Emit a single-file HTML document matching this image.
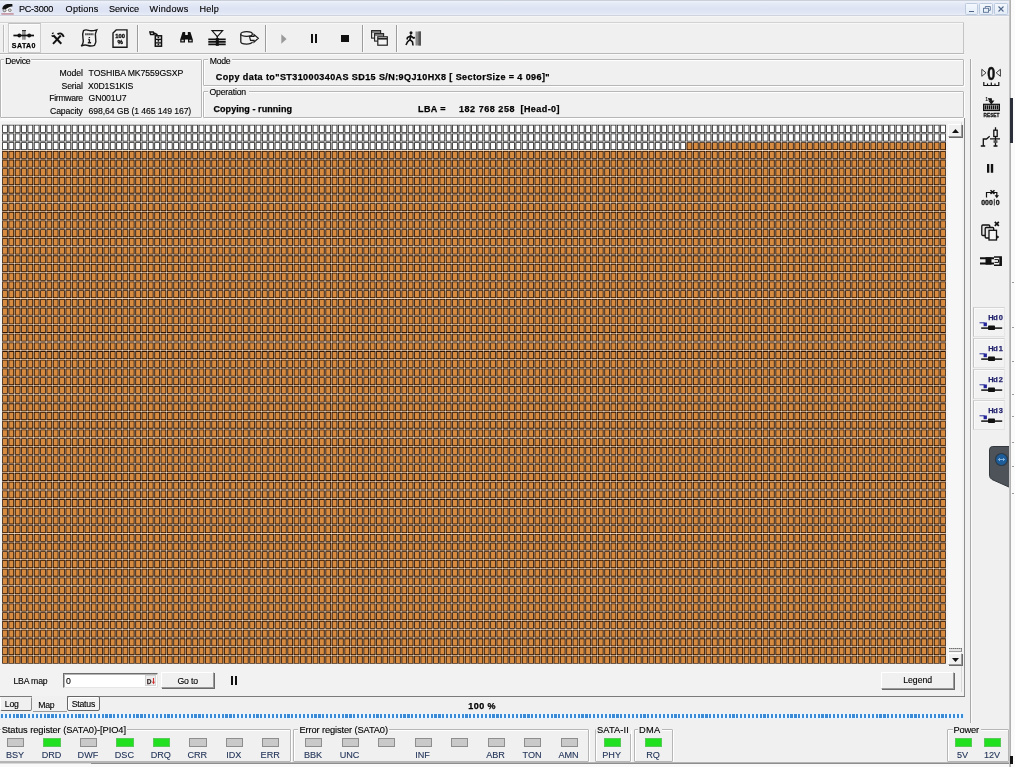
<!DOCTYPE html>
<html><head><meta charset="utf-8"><title>PC-3000</title>
<style>
html,body{margin:0;padding:0;}
body{width:1015px;height:767px;overflow:hidden;background:#f0f0f0;position:relative;font-family:"Liberation Sans",sans-serif;font-size:8.7px;color:#000;}
.a{position:absolute;box-sizing:border-box;}
.t{position:absolute;white-space:nowrap;-webkit-text-stroke:0.12px;}
.grp{border:1px solid #b6b6b6;box-shadow:inset 1px 1px 0 #fff,1px 1px 0 #fff;border-radius:1px;}
.lbl{background:#f0f0f0;}
.ind{border:1px solid #8e8e8e;background:#c9c9c9;}
.ind.on{background:#20e020;border-color:#5ac85a;}
.btn{background:#f0f0f0;border:1px solid;border-color:#fff #9a9a9a #9a9a9a #fff;box-shadow:1px 1px 0 #6a6a6a;}
.sep{width:1px;background:#9c9c9c;box-shadow:1px 0 0 #fbfbfb;}
svg{position:absolute;overflow:visible;}
#root{position:absolute;left:0;top:0;width:1015px;height:767px;overflow:hidden;will-change:transform;}
</style></head><body><div id="root">
<div class="a " style="left:0.00px;top:0.00px;width:1010.00px;height:1.00px;background:#c9d0da;"></div>
<div class="a " style="left:0.00px;top:1.00px;width:1010.00px;height:14.00px;background:linear-gradient(180deg,#eef2fa 0,#e4e9f6 20%,#dde3f3 55%,#dfe5f4 80%,#e9edf7 100%);"></div>
<div class="a " style="left:0.00px;top:15.00px;width:1010.00px;height:1.00px;background:#cdd3df;"></div>
<div class="a " style="left:0.00px;top:16.00px;width:1010.00px;height:1.00px;background:#f5f5f6;"></div>
<div class="t " style="left:18.90px;top:4px;font-size:9.1px;line-height:10px;letter-spacing:-0.231px;">PC-3000</div>
<div class="t " style="left:65.60px;top:4px;font-size:9.1px;line-height:10px;letter-spacing:0.220px;">Options</div>
<div class="t " style="left:109.00px;top:4px;font-size:9.1px;line-height:10px;letter-spacing:-0.049px;">Service</div>
<div class="t " style="left:149.50px;top:4px;font-size:9.1px;line-height:10px;letter-spacing:0.298px;">Windows</div>
<div class="t " style="left:199.50px;top:4px;font-size:9.1px;line-height:10px;letter-spacing:0.196px;">Help</div>
<svg style="left:1px;top:3px" width="13" height="12" viewBox="0 0 13 12"><ellipse cx="6.500" cy="6.800" rx="5" ry="3" fill="#fafafa"/><path d="M1.300 5.600Q2 1.500 6.500 1L11.300 .9 11.500 3.500Q9.500 3.300 8 4.300L4.500 6.300 1.500 6.500z" fill="#111"/><ellipse cx="3.600" cy="7.400" rx="1.500" ry="1.300" fill="#ddd" stroke="#444" stroke-width=".7"/><ellipse cx="8.800" cy="7.200" rx="1.500" ry="1.300" fill="#ddd" stroke="#555" stroke-width=".7"/><rect x=".3" y="10.400" width="12.400" height="1.100" fill="#b86a78"/></svg>
<div class="a " style="left:965.00px;top:2.50px;width:12.70px;height:12.70px;background:linear-gradient(180deg,#f4f8fd,#e3ecf7);border:1px solid #bccbde;border-radius:1.5px;"></div>
<div class="a " style="left:979.40px;top:2.50px;width:13.60px;height:12.70px;background:linear-gradient(180deg,#f4f8fd,#e3ecf7);border:1px solid #bccbde;border-radius:1.5px;"></div>
<div class="a " style="left:994.30px;top:2.50px;width:13.70px;height:12.70px;background:linear-gradient(180deg,#f4f8fd,#e3ecf7);border:1px solid #bccbde;border-radius:1.5px;"></div>
<div class="a " style="left:969.40px;top:10.80px;width:4.20px;height:1.20px;background:#50678a;"></div>
<svg style="left:982.500px;top:5.500px" width="8" height="7" viewBox="0 0 8 7"><path d="M2.300 .5h5v3.800h-1.300 M2.300 .5v1.500" fill="none" stroke="#5a7194" stroke-width=".9"/><rect x=".5" y="2.300" width="5" height="4" fill="none" stroke="#5a7194" stroke-width=".9"/></svg>
<svg style="left:998.300px;top:6px" width="6" height="6" viewBox="0 0 6 6"><path d="M.5 .5L5.500 5.500M5.500 .5L.5 5.500" stroke="#50678a" stroke-width="1.100"/></svg>
<div class="a " style="left:0.00px;top:22.00px;width:964.00px;height:1.00px;background:#d2d2d2;"></div>
<div class="a " style="left:0.00px;top:23.00px;width:964.00px;height:1.00px;background:#f8f8f8;"></div>
<div class="a " style="left:0.00px;top:53.00px;width:964.00px;height:1.00px;background:#b9b9b9;"></div>
<div class="a " style="left:0.00px;top:54.00px;width:964.00px;height:1.00px;background:#fafafa;"></div>
<div class="a " style="left:963.00px;top:23.00px;width:1.00px;height:30.00px;background:#c4c4c4;"></div>
<div class="a " style="left:2.50px;top:25.00px;width:1.00px;height:27.00px;background:#bcbcbc;box-shadow:1px 0 0 #fafafa;"></div>
<div class="a " style="left:8.00px;top:23.00px;width:33.00px;height:30.00px;border:1px solid #cdcdcd;border-top-color:#c0c0c0;background:#f5f5f5;box-shadow:inset 1px 1px 0 #fcfcfc;"></div>
<div class="t " style="left:11.80px;top:42px;font-size:7px;line-height:7px;letter-spacing:0.438px;font-weight:bold;-webkit-text-stroke:0.25px;">SATA0</div>
<svg style="left:13px;top:30px" width="22" height="10" viewBox="0 0 22 10"><path d="M.4 5.500h20.600" stroke="#111" stroke-width="1.700"/><path d="M10 .3v9.400M11.900 .3v9.400" stroke="#111" stroke-width=".8"/><path d="M9 .6h4" stroke="#111" stroke-width=".9"/><circle cx="6.300" cy="5.500" r="1.900" fill="#111"/><circle cx="16.200" cy="5.500" r="1.900" fill="#111"/></svg>
<svg style="left:51px;top:31.500px" width="14" height="13" viewBox="0 0 14 13"><path d="M2.300 3.300L10.300 11.800" stroke="#111" stroke-width="2"/><path d="M9.800 3.500L2 11.800" stroke="#111" stroke-width="1.900"/><path d="M6.500 2.300Q10.500 -.5 12.800 4.800" stroke="#111" stroke-width="1.900" fill="none"/><path d="M.8 3.200Q1.500 5 3.300 4.200M1 1.800L2.600 .8" stroke="#111" stroke-width="1.300" fill="none"/></svg>
<svg style="left:80px;top:29px" width="18" height="18" viewBox="0 0 18 18"><path d="M3.500 1.600Q5.500 .3 8.500 1.300T16.800 .8Q14.600 5 15.600 9T14.500 16.300Q11 17.600 8 16.500T1.200 17Q4 14 3 9.500T3.500 1.600z" fill="#f2f2f2" stroke="#1a1a1a" stroke-width="1.400"/><path d="M5.300 5.200h8.400" stroke="#1a1a1a" stroke-width="2" stroke-dasharray="1.300 .7"/><path d="M9.400 8v1.100M9.400 10.200v3.400M7.800 13.800h3.300M8.300 10.400h1.200" stroke="#1a1a1a" stroke-width="1.400"/></svg>
<svg style="left:112px;top:29px" width="16" height="19" viewBox="0 0 16 19"><path d="M4.200 .9H15v17.300H1V4z" fill="#f4f4f4" stroke="#1a1a1a" stroke-width="1.400"/><text x="8.200" y="9.300" font-family="Liberation Sans,sans-serif" font-size="5.800" font-weight="bold" text-anchor="middle" fill="#111" stroke="#111" stroke-width=".35">100</text><text x="8.200" y="15" font-family="Liberation Sans,sans-serif" font-size="6" font-weight="bold" text-anchor="middle" fill="#111" stroke="#111" stroke-width=".35">%</text></svg>
<div class="a sep" style="left:137.00px;top:25.00px;width:1.00px;height:27.00px;"></div>
<svg style="left:148.500px;top:30.500px" width="14" height="16" viewBox="0 0 14 16"><path d="M.8 1h3.500l.8 2.500H1.500z" fill="#f4f4f4" stroke="#111" stroke-width="1.300"/><path d="M5 2l3 1.500v2" stroke="#111" stroke-width="1.400" fill="none"/><rect x="6.300" y="4.800" width="6.200" height="10.400" fill="#eee" stroke="#111" stroke-width="1.500"/><path d="M6.300 8.300h6.200M6.300 11.800h6.200" stroke="#111" stroke-width="1.300"/><path d="M9.400 5.500v9.500" stroke="#111" stroke-width="1.600" stroke-dasharray="1.800 1.700"/></svg>
<svg style="left:179.500px;top:31.500px" width="13" height="11" viewBox="0 0 13 11"><path d="M2.600 0h2.600v3h2.600V0h2.600l2.400 7.500V10.500H8V7.500H5v3H.2V7.500z" fill="#111"/><rect x="1.500" y="7.800" width="2.200" height="1.500" fill="#ccc"/><rect x="9.300" y="7.800" width="2.200" height="1.500" fill="#ccc"/></svg>
<svg style="left:208px;top:30.300px" width="18" height="16" viewBox="0 0 18 16"><path d="M4 .6h10.700L9.300 6.600z" fill="#f4f4f4" stroke="#111" stroke-width="1.100"/><path d="M9.300 6v3" stroke="#111" stroke-width="1.300"/><path d="M.3 9.300h17.400M.3 11.800h17.400M.3 14.300h17.400" stroke="#111" stroke-width="1.700"/><rect x="7.800" y="8" width="3" height="7.800" fill="#111"/></svg>
<svg style="left:239.500px;top:31px" width="19" height="14" viewBox="0 0 19 14"><path d="M.8 3v7.800c0 1.300 2.600 2.300 5.800 2.300s5.800-1 5.800-2.300" fill="none" stroke="#1c1c1c" stroke-width="1.300"/><ellipse cx="6.600" cy="3" rx="5.800" ry="2.300" fill="#f6f6f6" stroke="#1c1c1c" stroke-width="1.300"/><path d="M9.500 5.300h4.500v-1.800l4.300 3.800-4.300 3.800V9.300h-3.500z" fill="#f6f6f6" stroke="#1c1c1c" stroke-width="1.200"/></svg>
<div class="a sep" style="left:265.00px;top:25.00px;width:1.00px;height:27.00px;"></div>
<svg style="left:281px;top:34px" width="6" height="10" viewBox="0 0 6 10"><path d="M.3 .3L5.600 5 .3 9.700z" fill="#9a9a9a"/></svg>
<div class="a " style="left:310.70px;top:34.00px;width:2.30px;height:9.20px;background:#111;"></div>
<div class="a " style="left:315.20px;top:34.00px;width:2.30px;height:9.20px;background:#111;"></div>
<div class="a " style="left:341.30px;top:34.60px;width:7.60px;height:7.60px;background:#111;"></div>
<div class="a sep" style="left:362.00px;top:25.00px;width:1.00px;height:27.00px;"></div>
<svg style="left:371px;top:30px" width="17" height="16" viewBox="0 0 17 16"><rect x=".6" y=".6" width="9" height="7.500" fill="#e8e8e8" stroke="#222" stroke-width="1.1"/><rect x="3.6" y="3.6" width="9" height="7.500" fill="#e8e8e8" stroke="#222" stroke-width="1.1"/><rect x="6.800" y="6.800" width="9.500" height="8.400" fill="#f4f4f4" stroke="#222" stroke-width="1.2"/><path d="M6.800 8.800h9.500" stroke="#222" stroke-width="1.600"/><path d="M.6 2h9M3.600 5h9" stroke="#222" stroke-width="1.2"/></svg>
<div class="a sep" style="left:396.00px;top:25.00px;width:1.00px;height:27.00px;"></div>
<svg style="left:405px;top:31px" width="17" height="15" viewBox="0 0 17 15"><rect x="10.500" y=".5" width="5.500" height="14" fill="#8a8a8a"/><rect x="13.500" y=".5" width="2.500" height="14" fill="#555"/><circle cx="6" cy="1.800" r="1.500" fill="#111"/><path d="M6 3.500L5 8.500 7.500 11 8 14.500M5 8.500L2.500 11 1 14M5.500 5L2.500 6.500 2 8.500M5.800 5L8.500 7 10 6.500" stroke="#111" stroke-width="1.600" fill="none"/></svg>
<div class="a grp" style="left:0.00px;top:59.00px;width:201.50px;height:58.50px;"></div>
<div class="a lbl" style="left:4.00px;top:55.00px;width:27.00px;height:9.00px;"></div>
<div class="t " style="left:5.20px;top:56px;font-size:8.7px;line-height:10px;letter-spacing:-0.216px;">Device</div>
<div class="t " style="left:59.50px;top:68px;font-size:8.7px;line-height:10px;letter-spacing:-0.079px;">Model</div>
<div class="t " style="left:61.50px;top:81px;font-size:8.7px;line-height:10px;letter-spacing:-0.157px;">Serial</div>
<div class="t " style="left:49.30px;top:93px;font-size:8.7px;line-height:10px;letter-spacing:-0.344px;">Firmware</div>
<div class="t " style="left:50.00px;top:106px;font-size:8.7px;line-height:10px;letter-spacing:-0.131px;">Capacity</div>
<div class="t " style="left:88.60px;top:68px;font-size:8.7px;line-height:10px;letter-spacing:-0.103px;">TOSHIBA MK7559GSXP</div>
<div class="t " style="left:88.00px;top:81px;font-size:8.7px;line-height:10px;letter-spacing:-0.125px;">X0D1S1KIS</div>
<div class="t " style="left:88.60px;top:93px;font-size:8.7px;line-height:10px;letter-spacing:-0.113px;">GN001U7</div>
<div class="t " style="left:88.60px;top:106px;font-size:8.7px;line-height:10px;letter-spacing:-0.110px;">698,64 GB (1 465 149 167)</div>
<div class="a grp" style="left:203.00px;top:59.00px;width:760.50px;height:26.50px;"></div>
<div class="a lbl" style="left:207.50px;top:55.00px;width:24.00px;height:9.00px;"></div>
<div class="t " style="left:209.70px;top:56px;font-size:8.7px;line-height:10px;letter-spacing:-0.241px;">Mode</div>
<div class="t " style="left:215.80px;top:72px;font-size:9px;line-height:10px;letter-spacing:0.413px;font-weight:bold;-webkit-text-stroke:0.25px;">Copy data to"ST31000340AS SD15 S/N:9QJ10HX8 [ SectorSize = 4 096]"</div>
<div class="a grp" style="left:203.00px;top:91.00px;width:760.50px;height:26.50px;"></div>
<div class="a lbl" style="left:207.50px;top:87.00px;width:41.00px;height:9.00px;"></div>
<div class="t " style="left:209.50px;top:87px;font-size:8.7px;line-height:10px;letter-spacing:-0.190px;">Operation</div>
<div class="t " style="left:213.50px;top:104px;font-size:9px;line-height:10px;letter-spacing:0.060px;font-weight:bold;-webkit-text-stroke:0.25px;">Copying - running</div>
<div class="t " style="left:418.00px;top:104px;font-size:9px;line-height:10px;letter-spacing:0.416px;font-weight:bold;-webkit-text-stroke:0.25px;">LBA =</div>
<div class="t " style="left:459.00px;top:104px;font-size:9px;line-height:10px;letter-spacing:0.541px;font-weight:bold;-webkit-text-stroke:0.25px;">182 768 258</div>
<div class="t " style="left:520.50px;top:104px;font-size:9px;line-height:10px;letter-spacing:0.437px;font-weight:bold;-webkit-text-stroke:0.25px;">[Head-0]</div>
<div class="a " style="left:0.00px;top:119.00px;width:964.50px;height:2.00px;background:#f9f9f9;"></div>
<div class="a " style="left:0.00px;top:121.00px;width:964.00px;height:575.00px;background:#f2f2f2;"></div>
<div class="a " style="left:963.70px;top:118.00px;width:1.30px;height:579.00px;background:#8f8f8f;"></div>
<div class="a " style="left:961.00px;top:122.00px;width:1.00px;height:570.00px;background:#d9d9d9;"></div>
<div class="a " style="left:0.00px;top:695.80px;width:32.00px;height:1.40px;background:#7b7b7b;"></div>
<div class="a " style="left:66.50px;top:695.80px;width:898.50px;height:1.40px;background:#7b7b7b;"></div>
<svg style="left:2px;top:124px" width="945.61" height="540.88"><g transform="translate(0.2 0.8) scale(0.79228 0.7913)"><clipPath id="vc"><path d="M1.0 0h5.0v681h-5.0zM9.0 0h5.0v681h-5.0zM17.0 0h5.0v681h-5.0zM25.0 0h5.0v681h-5.0zM33.0 0h5.0v681h-5.0zM41.0 0h5.0v681h-5.0zM49.0 0h5.0v681h-5.0zM57.0 0h5.0v681h-5.0zM65.0 0h5.0v681h-5.0zM73.0 0h5.0v681h-5.0zM81.0 0h5.0v681h-5.0zM89.0 0h5.0v681h-5.0zM97.0 0h5.0v681h-5.0zM105.0 0h5.0v681h-5.0zM113.0 0h5.0v681h-5.0zM121.0 0h5.0v681h-5.0zM129.0 0h5.0v681h-5.0zM137.0 0h5.0v681h-5.0zM145.0 0h5.0v681h-5.0zM153.0 0h5.0v681h-5.0zM161.0 0h5.0v681h-5.0zM169.0 0h5.0v681h-5.0zM177.0 0h5.0v681h-5.0zM185.0 0h5.0v681h-5.0zM193.0 0h5.0v681h-5.0zM201.0 0h5.0v681h-5.0zM209.0 0h5.0v681h-5.0zM217.0 0h5.0v681h-5.0zM225.0 0h5.0v681h-5.0zM233.0 0h5.0v681h-5.0zM241.0 0h5.0v681h-5.0zM249.0 0h5.0v681h-5.0zM257.0 0h5.0v681h-5.0zM265.0 0h5.0v681h-5.0zM273.0 0h5.0v681h-5.0zM281.0 0h5.0v681h-5.0zM289.0 0h5.0v681h-5.0zM297.0 0h5.0v681h-5.0zM305.0 0h5.0v681h-5.0zM313.0 0h5.0v681h-5.0zM321.0 0h5.0v681h-5.0zM329.0 0h5.0v681h-5.0zM337.0 0h5.0v681h-5.0zM345.0 0h5.0v681h-5.0zM353.0 0h5.0v681h-5.0zM361.0 0h5.0v681h-5.0zM369.0 0h5.0v681h-5.0zM377.0 0h5.0v681h-5.0zM385.0 0h5.0v681h-5.0zM393.0 0h5.0v681h-5.0zM401.0 0h5.0v681h-5.0zM409.0 0h5.0v681h-5.0zM417.0 0h5.0v681h-5.0zM425.0 0h5.0v681h-5.0zM433.0 0h5.0v681h-5.0zM441.0 0h5.0v681h-5.0zM449.0 0h5.0v681h-5.0zM457.0 0h5.0v681h-5.0zM465.0 0h5.0v681h-5.0zM473.0 0h5.0v681h-5.0zM481.0 0h5.0v681h-5.0zM489.0 0h5.0v681h-5.0zM497.0 0h5.0v681h-5.0zM505.0 0h5.0v681h-5.0zM513.0 0h5.0v681h-5.0zM521.0 0h5.0v681h-5.0zM529.0 0h5.0v681h-5.0zM537.0 0h5.0v681h-5.0zM545.0 0h5.0v681h-5.0zM553.0 0h5.0v681h-5.0zM561.0 0h5.0v681h-5.0zM569.0 0h5.0v681h-5.0zM577.0 0h5.0v681h-5.0zM585.0 0h5.0v681h-5.0zM593.0 0h5.0v681h-5.0zM601.0 0h5.0v681h-5.0zM609.0 0h5.0v681h-5.0zM617.0 0h5.0v681h-5.0zM625.0 0h5.0v681h-5.0zM633.0 0h5.0v681h-5.0zM641.0 0h5.0v681h-5.0zM649.0 0h5.0v681h-5.0zM657.0 0h5.0v681h-5.0zM665.0 0h5.0v681h-5.0zM673.0 0h5.0v681h-5.0zM681.0 0h5.0v681h-5.0zM689.0 0h5.0v681h-5.0zM697.0 0h5.0v681h-5.0zM705.0 0h5.0v681h-5.0zM713.0 0h5.0v681h-5.0zM721.0 0h5.0v681h-5.0zM729.0 0h5.0v681h-5.0zM737.0 0h5.0v681h-5.0zM745.0 0h5.0v681h-5.0zM753.0 0h5.0v681h-5.0zM761.0 0h5.0v681h-5.0zM769.0 0h5.0v681h-5.0zM777.0 0h5.0v681h-5.0zM785.0 0h5.0v681h-5.0zM793.0 0h5.0v681h-5.0zM801.0 0h5.0v681h-5.0zM809.0 0h5.0v681h-5.0zM817.0 0h5.0v681h-5.0zM825.0 0h5.0v681h-5.0zM833.0 0h5.0v681h-5.0zM841.0 0h5.0v681h-5.0zM849.0 0h5.0v681h-5.0zM857.0 0h5.0v681h-5.0zM865.0 0h5.0v681h-5.0zM873.0 0h5.0v681h-5.0zM881.0 0h5.0v681h-5.0zM889.0 0h5.0v681h-5.0zM897.0 0h5.0v681h-5.0zM905.0 0h5.0v681h-5.0zM913.0 0h5.0v681h-5.0zM921.0 0h5.0v681h-5.0zM929.0 0h5.0v681h-5.0zM937.0 0h5.0v681h-5.0zM945.0 0h5.0v681h-5.0zM953.0 0h5.0v681h-5.0zM961.0 0h5.0v681h-5.0zM969.0 0h5.0v681h-5.0zM977.0 0h5.0v681h-5.0zM985.0 0h5.0v681h-5.0zM993.0 0h5.0v681h-5.0zM1001.0 0h5.0v681h-5.0zM1009.0 0h5.0v681h-5.0zM1017.0 0h5.0v681h-5.0zM1025.0 0h5.0v681h-5.0zM1033.0 0h5.0v681h-5.0zM1041.0 0h5.0v681h-5.0zM1049.0 0h5.0v681h-5.0zM1057.0 0h5.0v681h-5.0zM1065.0 0h5.0v681h-5.0zM1073.0 0h5.0v681h-5.0zM1081.0 0h5.0v681h-5.0zM1089.0 0h5.0v681h-5.0zM1097.0 0h5.0v681h-5.0zM1105.0 0h5.0v681h-5.0zM1113.0 0h5.0v681h-5.0zM1121.0 0h5.0v681h-5.0zM1129.0 0h5.0v681h-5.0zM1137.0 0h5.0v681h-5.0zM1145.0 0h5.0v681h-5.0zM1153.0 0h5.0v681h-5.0zM1161.0 0h5.0v681h-5.0zM1169.0 0h5.0v681h-5.0zM1177.0 0h5.0v681h-5.0zM1185.0 0h5.0v681h-5.0z"/></clipPath><rect x="0" y="0" width="1191" height="32.5" fill="#262626"/><rect x="0" y="32.5" width="1191" height="648.5" fill="#2e1401"/><rect x="863.5" y="21.5" width="327.5" height="11.5" fill="#2e1401"/><g clip-path="url(#vc)"><path fill="#ffffff" d="M0 1.0h1191v8.0h-1191zM0 12.0h1191v8.0h-1191zM0 23.0h863v8.0h-863z"/><path fill="#d68b40" d="M864 23.0h327v8.0h-327zM0 34.0h1191v8.0h-1191zM0 45.0h1191v8.0h-1191zM0 56.0h1191v8.0h-1191zM0 67.0h1191v8.0h-1191zM0 78.0h1191v8.0h-1191zM0 89.0h1191v8.0h-1191zM0 100.0h1191v8.0h-1191zM0 111.0h1191v8.0h-1191zM0 122.0h1191v8.0h-1191zM0 133.0h1191v8.0h-1191zM0 144.0h1191v8.0h-1191zM0 155.0h1191v8.0h-1191zM0 166.0h1191v8.0h-1191zM0 177.0h1191v8.0h-1191zM0 188.0h1191v8.0h-1191zM0 199.0h1191v8.0h-1191zM0 210.0h1191v8.0h-1191zM0 221.0h1191v8.0h-1191zM0 232.0h1191v8.0h-1191zM0 243.0h1191v8.0h-1191zM0 254.0h1191v8.0h-1191zM0 265.0h1191v8.0h-1191zM0 276.0h1191v8.0h-1191zM0 287.0h1191v8.0h-1191zM0 298.0h1191v8.0h-1191zM0 309.0h1191v8.0h-1191zM0 320.0h1191v8.0h-1191zM0 331.0h1191v8.0h-1191zM0 342.0h1191v8.0h-1191zM0 353.0h1191v8.0h-1191zM0 364.0h1191v8.0h-1191zM0 375.0h1191v8.0h-1191zM0 386.0h1191v8.0h-1191zM0 397.0h1191v8.0h-1191zM0 408.0h1191v8.0h-1191zM0 419.0h1191v8.0h-1191zM0 430.0h1191v8.0h-1191zM0 441.0h1191v8.0h-1191zM0 452.0h1191v8.0h-1191zM0 463.0h1191v8.0h-1191zM0 474.0h1191v8.0h-1191zM0 485.0h1191v8.0h-1191zM0 496.0h1191v8.0h-1191zM0 507.0h1191v8.0h-1191zM0 518.0h1191v8.0h-1191zM0 529.0h1191v8.0h-1191zM0 540.0h1191v8.0h-1191zM0 551.0h1191v8.0h-1191zM0 562.0h1191v8.0h-1191zM0 573.0h1191v8.0h-1191zM0 584.0h1191v8.0h-1191zM0 595.0h1191v8.0h-1191zM0 606.0h1191v8.0h-1191zM0 617.0h1191v8.0h-1191zM0 628.0h1191v8.0h-1191zM0 639.0h1191v8.0h-1191zM0 650.0h1191v8.0h-1191zM0 661.0h1191v8.0h-1191zM0 672.0h1191v8.0h-1191z"/></g><clipPath id="gc"><path d="M7 0h1v681h-1zM15 0h1v681h-1zM23 0h1v681h-1zM31 0h1v681h-1zM39 0h1v681h-1zM47 0h1v681h-1zM55 0h1v681h-1zM63 0h1v681h-1zM71 0h1v681h-1zM79 0h1v681h-1zM87 0h1v681h-1zM95 0h1v681h-1zM103 0h1v681h-1zM111 0h1v681h-1zM119 0h1v681h-1zM127 0h1v681h-1zM135 0h1v681h-1zM143 0h1v681h-1zM151 0h1v681h-1zM159 0h1v681h-1zM167 0h1v681h-1zM175 0h1v681h-1zM183 0h1v681h-1zM191 0h1v681h-1zM199 0h1v681h-1zM207 0h1v681h-1zM215 0h1v681h-1zM223 0h1v681h-1zM231 0h1v681h-1zM239 0h1v681h-1zM247 0h1v681h-1zM255 0h1v681h-1zM263 0h1v681h-1zM271 0h1v681h-1zM279 0h1v681h-1zM287 0h1v681h-1zM295 0h1v681h-1zM303 0h1v681h-1zM311 0h1v681h-1zM319 0h1v681h-1zM327 0h1v681h-1zM335 0h1v681h-1zM343 0h1v681h-1zM351 0h1v681h-1zM359 0h1v681h-1zM367 0h1v681h-1zM375 0h1v681h-1zM383 0h1v681h-1zM391 0h1v681h-1zM399 0h1v681h-1zM407 0h1v681h-1zM415 0h1v681h-1zM423 0h1v681h-1zM431 0h1v681h-1zM439 0h1v681h-1zM447 0h1v681h-1zM455 0h1v681h-1zM463 0h1v681h-1zM471 0h1v681h-1zM479 0h1v681h-1zM487 0h1v681h-1zM495 0h1v681h-1zM503 0h1v681h-1zM511 0h1v681h-1zM519 0h1v681h-1zM527 0h1v681h-1zM535 0h1v681h-1zM543 0h1v681h-1zM551 0h1v681h-1zM559 0h1v681h-1zM567 0h1v681h-1zM575 0h1v681h-1zM583 0h1v681h-1zM591 0h1v681h-1zM599 0h1v681h-1zM607 0h1v681h-1zM615 0h1v681h-1zM623 0h1v681h-1zM631 0h1v681h-1zM639 0h1v681h-1zM647 0h1v681h-1zM655 0h1v681h-1zM663 0h1v681h-1zM671 0h1v681h-1zM679 0h1v681h-1zM687 0h1v681h-1zM695 0h1v681h-1zM703 0h1v681h-1zM711 0h1v681h-1zM719 0h1v681h-1zM727 0h1v681h-1zM735 0h1v681h-1zM743 0h1v681h-1zM751 0h1v681h-1zM759 0h1v681h-1zM767 0h1v681h-1zM775 0h1v681h-1zM783 0h1v681h-1zM791 0h1v681h-1zM799 0h1v681h-1zM807 0h1v681h-1zM815 0h1v681h-1zM823 0h1v681h-1zM831 0h1v681h-1zM839 0h1v681h-1zM847 0h1v681h-1zM855 0h1v681h-1zM863 0h1v681h-1zM871 0h1v681h-1zM879 0h1v681h-1zM887 0h1v681h-1zM895 0h1v681h-1zM903 0h1v681h-1zM911 0h1v681h-1zM919 0h1v681h-1zM927 0h1v681h-1zM935 0h1v681h-1zM943 0h1v681h-1zM951 0h1v681h-1zM959 0h1v681h-1zM967 0h1v681h-1zM975 0h1v681h-1zM983 0h1v681h-1zM991 0h1v681h-1zM999 0h1v681h-1zM1007 0h1v681h-1zM1015 0h1v681h-1zM1023 0h1v681h-1zM1031 0h1v681h-1zM1039 0h1v681h-1zM1047 0h1v681h-1zM1055 0h1v681h-1zM1063 0h1v681h-1zM1071 0h1v681h-1zM1079 0h1v681h-1zM1087 0h1v681h-1zM1095 0h1v681h-1zM1103 0h1v681h-1zM1111 0h1v681h-1zM1119 0h1v681h-1zM1127 0h1v681h-1zM1135 0h1v681h-1zM1143 0h1v681h-1zM1151 0h1v681h-1zM1159 0h1v681h-1zM1167 0h1v681h-1zM1175 0h1v681h-1zM1183 0h1v681h-1z"/></clipPath><path fill="#f4f4f4" fill-opacity="0.75" d="M7 0h1v32.5h-1zM15 0h1v32.5h-1zM23 0h1v32.5h-1zM31 0h1v32.5h-1zM39 0h1v32.5h-1zM47 0h1v32.5h-1zM55 0h1v32.5h-1zM63 0h1v32.5h-1zM71 0h1v32.5h-1zM79 0h1v32.5h-1zM87 0h1v32.5h-1zM95 0h1v32.5h-1zM103 0h1v32.5h-1zM111 0h1v32.5h-1zM119 0h1v32.5h-1zM127 0h1v32.5h-1zM135 0h1v32.5h-1zM143 0h1v32.5h-1zM151 0h1v32.5h-1zM159 0h1v32.5h-1zM167 0h1v32.5h-1zM175 0h1v32.5h-1zM183 0h1v32.5h-1zM191 0h1v32.5h-1zM199 0h1v32.5h-1zM207 0h1v32.5h-1zM215 0h1v32.5h-1zM223 0h1v32.5h-1zM231 0h1v32.5h-1zM239 0h1v32.5h-1zM247 0h1v32.5h-1zM255 0h1v32.5h-1zM263 0h1v32.5h-1zM271 0h1v32.5h-1zM279 0h1v32.5h-1zM287 0h1v32.5h-1zM295 0h1v32.5h-1zM303 0h1v32.5h-1zM311 0h1v32.5h-1zM319 0h1v32.5h-1zM327 0h1v32.5h-1zM335 0h1v32.5h-1zM343 0h1v32.5h-1zM351 0h1v32.5h-1zM359 0h1v32.5h-1zM367 0h1v32.5h-1zM375 0h1v32.5h-1zM383 0h1v32.5h-1zM391 0h1v32.5h-1zM399 0h1v32.5h-1zM407 0h1v32.5h-1zM415 0h1v32.5h-1zM423 0h1v32.5h-1zM431 0h1v32.5h-1zM439 0h1v32.5h-1zM447 0h1v32.5h-1zM455 0h1v32.5h-1zM463 0h1v32.5h-1zM471 0h1v32.5h-1zM479 0h1v32.5h-1zM487 0h1v32.5h-1zM495 0h1v32.5h-1zM503 0h1v32.5h-1zM511 0h1v32.5h-1zM519 0h1v32.5h-1zM527 0h1v32.5h-1zM535 0h1v32.5h-1zM543 0h1v32.5h-1zM551 0h1v32.5h-1zM559 0h1v32.5h-1zM567 0h1v32.5h-1zM575 0h1v32.5h-1zM583 0h1v32.5h-1zM591 0h1v32.5h-1zM599 0h1v32.5h-1zM607 0h1v32.5h-1zM615 0h1v32.5h-1zM623 0h1v32.5h-1zM631 0h1v32.5h-1zM639 0h1v32.5h-1zM647 0h1v32.5h-1zM655 0h1v32.5h-1zM663 0h1v32.5h-1zM671 0h1v32.5h-1zM679 0h1v32.5h-1zM687 0h1v32.5h-1zM695 0h1v32.5h-1zM703 0h1v32.5h-1zM711 0h1v32.5h-1zM719 0h1v32.5h-1zM727 0h1v32.5h-1zM735 0h1v32.5h-1zM743 0h1v32.5h-1zM751 0h1v32.5h-1zM759 0h1v32.5h-1zM767 0h1v32.5h-1zM775 0h1v32.5h-1zM783 0h1v32.5h-1zM791 0h1v32.5h-1zM799 0h1v32.5h-1zM807 0h1v32.5h-1zM815 0h1v32.5h-1zM823 0h1v32.5h-1zM831 0h1v32.5h-1zM839 0h1v32.5h-1zM847 0h1v32.5h-1zM855 0h1v32.5h-1zM863 0h1v21.5h-1zM871 0h1v21.5h-1zM879 0h1v21.5h-1zM887 0h1v21.5h-1zM895 0h1v21.5h-1zM903 0h1v21.5h-1zM911 0h1v21.5h-1zM919 0h1v21.5h-1zM927 0h1v21.5h-1zM935 0h1v21.5h-1zM943 0h1v21.5h-1zM951 0h1v21.5h-1zM959 0h1v21.5h-1zM967 0h1v21.5h-1zM975 0h1v21.5h-1zM983 0h1v21.5h-1zM991 0h1v21.5h-1zM999 0h1v21.5h-1zM1007 0h1v21.5h-1zM1015 0h1v21.5h-1zM1023 0h1v21.5h-1zM1031 0h1v21.5h-1zM1039 0h1v21.5h-1zM1047 0h1v21.5h-1zM1055 0h1v21.5h-1zM1063 0h1v21.5h-1zM1071 0h1v21.5h-1zM1079 0h1v21.5h-1zM1087 0h1v21.5h-1zM1095 0h1v21.5h-1zM1103 0h1v21.5h-1zM1111 0h1v21.5h-1zM1119 0h1v21.5h-1zM1127 0h1v21.5h-1zM1135 0h1v21.5h-1zM1143 0h1v21.5h-1zM1151 0h1v21.5h-1zM1159 0h1v21.5h-1zM1167 0h1v21.5h-1zM1175 0h1v21.5h-1zM1183 0h1v21.5h-1z"/><path fill="#f4f4f4" fill-opacity="0.92" d="M0 10h1191v1h-1191zM0 21h1191v1h-1191z"/><path fill="#eed4bc" fill-opacity="0.75" d="M7 32.5h1v648.5h-1zM15 32.5h1v648.5h-1zM23 32.5h1v648.5h-1zM31 32.5h1v648.5h-1zM39 32.5h1v648.5h-1zM47 32.5h1v648.5h-1zM55 32.5h1v648.5h-1zM63 32.5h1v648.5h-1zM71 32.5h1v648.5h-1zM79 32.5h1v648.5h-1zM87 32.5h1v648.5h-1zM95 32.5h1v648.5h-1zM103 32.5h1v648.5h-1zM111 32.5h1v648.5h-1zM119 32.5h1v648.5h-1zM127 32.5h1v648.5h-1zM135 32.5h1v648.5h-1zM143 32.5h1v648.5h-1zM151 32.5h1v648.5h-1zM159 32.5h1v648.5h-1zM167 32.5h1v648.5h-1zM175 32.5h1v648.5h-1zM183 32.5h1v648.5h-1zM191 32.5h1v648.5h-1zM199 32.5h1v648.5h-1zM207 32.5h1v648.5h-1zM215 32.5h1v648.5h-1zM223 32.5h1v648.5h-1zM231 32.5h1v648.5h-1zM239 32.5h1v648.5h-1zM247 32.5h1v648.5h-1zM255 32.5h1v648.5h-1zM263 32.5h1v648.5h-1zM271 32.5h1v648.5h-1zM279 32.5h1v648.5h-1zM287 32.5h1v648.5h-1zM295 32.5h1v648.5h-1zM303 32.5h1v648.5h-1zM311 32.5h1v648.5h-1zM319 32.5h1v648.5h-1zM327 32.5h1v648.5h-1zM335 32.5h1v648.5h-1zM343 32.5h1v648.5h-1zM351 32.5h1v648.5h-1zM359 32.5h1v648.5h-1zM367 32.5h1v648.5h-1zM375 32.5h1v648.5h-1zM383 32.5h1v648.5h-1zM391 32.5h1v648.5h-1zM399 32.5h1v648.5h-1zM407 32.5h1v648.5h-1zM415 32.5h1v648.5h-1zM423 32.5h1v648.5h-1zM431 32.5h1v648.5h-1zM439 32.5h1v648.5h-1zM447 32.5h1v648.5h-1zM455 32.5h1v648.5h-1zM463 32.5h1v648.5h-1zM471 32.5h1v648.5h-1zM479 32.5h1v648.5h-1zM487 32.5h1v648.5h-1zM495 32.5h1v648.5h-1zM503 32.5h1v648.5h-1zM511 32.5h1v648.5h-1zM519 32.5h1v648.5h-1zM527 32.5h1v648.5h-1zM535 32.5h1v648.5h-1zM543 32.5h1v648.5h-1zM551 32.5h1v648.5h-1zM559 32.5h1v648.5h-1zM567 32.5h1v648.5h-1zM575 32.5h1v648.5h-1zM583 32.5h1v648.5h-1zM591 32.5h1v648.5h-1zM599 32.5h1v648.5h-1zM607 32.5h1v648.5h-1zM615 32.5h1v648.5h-1zM623 32.5h1v648.5h-1zM631 32.5h1v648.5h-1zM639 32.5h1v648.5h-1zM647 32.5h1v648.5h-1zM655 32.5h1v648.5h-1zM663 32.5h1v648.5h-1zM671 32.5h1v648.5h-1zM679 32.5h1v648.5h-1zM687 32.5h1v648.5h-1zM695 32.5h1v648.5h-1zM703 32.5h1v648.5h-1zM711 32.5h1v648.5h-1zM719 32.5h1v648.5h-1zM727 32.5h1v648.5h-1zM735 32.5h1v648.5h-1zM743 32.5h1v648.5h-1zM751 32.5h1v648.5h-1zM759 32.5h1v648.5h-1zM767 32.5h1v648.5h-1zM775 32.5h1v648.5h-1zM783 32.5h1v648.5h-1zM791 32.5h1v648.5h-1zM799 32.5h1v648.5h-1zM807 32.5h1v648.5h-1zM815 32.5h1v648.5h-1zM823 32.5h1v648.5h-1zM831 32.5h1v648.5h-1zM839 32.5h1v648.5h-1zM847 32.5h1v648.5h-1zM855 32.5h1v648.5h-1zM863 21.5h1v659.5h-1zM871 21.5h1v659.5h-1zM879 21.5h1v659.5h-1zM887 21.5h1v659.5h-1zM895 21.5h1v659.5h-1zM903 21.5h1v659.5h-1zM911 21.5h1v659.5h-1zM919 21.5h1v659.5h-1zM927 21.5h1v659.5h-1zM935 21.5h1v659.5h-1zM943 21.5h1v659.5h-1zM951 21.5h1v659.5h-1zM959 21.5h1v659.5h-1zM967 21.5h1v659.5h-1zM975 21.5h1v659.5h-1zM983 21.5h1v659.5h-1zM991 21.5h1v659.5h-1zM999 21.5h1v659.5h-1zM1007 21.5h1v659.5h-1zM1015 21.5h1v659.5h-1zM1023 21.5h1v659.5h-1zM1031 21.5h1v659.5h-1zM1039 21.5h1v659.5h-1zM1047 21.5h1v659.5h-1zM1055 21.5h1v659.5h-1zM1063 21.5h1v659.5h-1zM1071 21.5h1v659.5h-1zM1079 21.5h1v659.5h-1zM1087 21.5h1v659.5h-1zM1095 21.5h1v659.5h-1zM1103 21.5h1v659.5h-1zM1111 21.5h1v659.5h-1zM1119 21.5h1v659.5h-1zM1127 21.5h1v659.5h-1zM1135 21.5h1v659.5h-1zM1143 21.5h1v659.5h-1zM1151 21.5h1v659.5h-1zM1159 21.5h1v659.5h-1zM1167 21.5h1v659.5h-1zM1175 21.5h1v659.5h-1zM1183 21.5h1v659.5h-1z"/><path fill="#eed4bc" fill-opacity="0.92" d="M0 32h1191v1h-1191zM0 43h1191v1h-1191zM0 54h1191v1h-1191zM0 65h1191v1h-1191zM0 76h1191v1h-1191zM0 87h1191v1h-1191zM0 98h1191v1h-1191zM0 109h1191v1h-1191zM0 120h1191v1h-1191zM0 131h1191v1h-1191zM0 142h1191v1h-1191zM0 153h1191v1h-1191zM0 164h1191v1h-1191zM0 175h1191v1h-1191zM0 186h1191v1h-1191zM0 197h1191v1h-1191zM0 208h1191v1h-1191zM0 219h1191v1h-1191zM0 230h1191v1h-1191zM0 241h1191v1h-1191zM0 252h1191v1h-1191zM0 263h1191v1h-1191zM0 274h1191v1h-1191zM0 285h1191v1h-1191zM0 296h1191v1h-1191zM0 307h1191v1h-1191zM0 318h1191v1h-1191zM0 329h1191v1h-1191zM0 340h1191v1h-1191zM0 351h1191v1h-1191zM0 362h1191v1h-1191zM0 373h1191v1h-1191zM0 384h1191v1h-1191zM0 395h1191v1h-1191zM0 406h1191v1h-1191zM0 417h1191v1h-1191zM0 428h1191v1h-1191zM0 439h1191v1h-1191zM0 450h1191v1h-1191zM0 461h1191v1h-1191zM0 472h1191v1h-1191zM0 483h1191v1h-1191zM0 494h1191v1h-1191zM0 505h1191v1h-1191zM0 516h1191v1h-1191zM0 527h1191v1h-1191zM0 538h1191v1h-1191zM0 549h1191v1h-1191zM0 560h1191v1h-1191zM0 571h1191v1h-1191zM0 582h1191v1h-1191zM0 593h1191v1h-1191zM0 604h1191v1h-1191zM0 615h1191v1h-1191zM0 626h1191v1h-1191zM0 637h1191v1h-1191zM0 648h1191v1h-1191zM0 659h1191v1h-1191zM0 670h1191v1h-1191z"/><g clip-path="url(#gc)"><path fill="#fff0e2" fill-opacity="1.0" d="M0 10h1191v1h-1191zM0 21h1191v1h-1191zM0 32h1191v1h-1191zM0 43h1191v1h-1191zM0 54h1191v1h-1191zM0 65h1191v1h-1191zM0 76h1191v1h-1191zM0 87h1191v1h-1191zM0 98h1191v1h-1191zM0 109h1191v1h-1191zM0 120h1191v1h-1191zM0 131h1191v1h-1191zM0 142h1191v1h-1191zM0 153h1191v1h-1191zM0 164h1191v1h-1191zM0 175h1191v1h-1191zM0 186h1191v1h-1191zM0 197h1191v1h-1191zM0 208h1191v1h-1191zM0 219h1191v1h-1191zM0 230h1191v1h-1191zM0 241h1191v1h-1191zM0 252h1191v1h-1191zM0 263h1191v1h-1191zM0 274h1191v1h-1191zM0 285h1191v1h-1191zM0 296h1191v1h-1191zM0 307h1191v1h-1191zM0 318h1191v1h-1191zM0 329h1191v1h-1191zM0 340h1191v1h-1191zM0 351h1191v1h-1191zM0 362h1191v1h-1191zM0 373h1191v1h-1191zM0 384h1191v1h-1191zM0 395h1191v1h-1191zM0 406h1191v1h-1191zM0 417h1191v1h-1191zM0 428h1191v1h-1191zM0 439h1191v1h-1191zM0 450h1191v1h-1191zM0 461h1191v1h-1191zM0 472h1191v1h-1191zM0 483h1191v1h-1191zM0 494h1191v1h-1191zM0 505h1191v1h-1191zM0 516h1191v1h-1191zM0 527h1191v1h-1191zM0 538h1191v1h-1191zM0 549h1191v1h-1191zM0 560h1191v1h-1191zM0 571h1191v1h-1191zM0 582h1191v1h-1191zM0 593h1191v1h-1191zM0 604h1191v1h-1191zM0 615h1191v1h-1191zM0 626h1191v1h-1191zM0 637h1191v1h-1191zM0 648h1191v1h-1191zM0 659h1191v1h-1191zM0 670h1191v1h-1191z"/></g></g></svg>
<div class="a " style="left:947.50px;top:124.00px;width:14.30px;height:541.50px;background:#f7f7f7;"></div>
<div class="a btn" style="left:948.20px;top:124.40px;width:13.60px;height:12.60px;"></div>
<svg style="left:951.5px;top:128.5px" width="7" height="4" viewBox="0 0 7 4"><path d="M0 4L3.500 0 7 4z" fill="#111"/></svg>
<div class="a btn" style="left:948.20px;top:652.80px;width:13.60px;height:12.60px;"></div>
<svg style="left:951.5px;top:657.5px" width="7" height="4" viewBox="0 0 7 4"><path d="M0 0L3.500 4 7 0z" fill="#111"/></svg>
<div class="a " style="left:948.50px;top:647.60px;width:13.00px;height:1.60px;background:repeating-linear-gradient(90deg,#6e6e6e 0,#6e6e6e 1.2px,#a8a8a8 1.2px,#a8a8a8 2px);"></div>
<div class="a " style="left:948.50px;top:649.20px;width:13.00px;height:2.60px;background:#e4e4e4;border-right:1px solid #8a8a8a;border-bottom:1px solid #a0a0a0;"></div>
<div class="t " style="left:13.40px;top:676px;font-size:8.7px;line-height:10px;letter-spacing:-0.158px;">LBA map</div>
<div class="a " style="left:63.00px;top:673.30px;width:94.80px;height:14.60px;background:#fff;border:1px solid;border-color:#6e6e6e #e6e6e6 #e6e6e6 #6e6e6e;box-shadow:inset 1px 1px 0 #b4b4b4;"></div>
<div class="t " style="left:66.00px;top:676px;font-size:8.7px;line-height:10px;">0</div>
<div class="a " style="left:145.30px;top:675.30px;width:11.00px;height:11.00px;background:#ededed;border:1px solid #d4d4d4;"></div>
<div class="t " style="left:146.80px;top:678px;font-size:6.5px;line-height:7px;font-weight:bold;-webkit-text-stroke:0.25px;color:#3a2a2a;">D</div>
<svg style="left:152.300px;top:677.500px" width="3" height="7" viewBox="0 0 3 7"><path d="M1.500 0v4.500" stroke="#d03030" stroke-width="1.100"/><path d="M0 3.800L1.500 6.500 3 3.800z" fill="#d03030"/></svg>
<div class="a btn" style="left:160.80px;top:672.30px;width:53.00px;height:15.60px;"></div>
<div class="t " style="left:177.50px;top:676px;font-size:8.7px;line-height:10px;letter-spacing:-0.156px;">Go to</div>
<div class="a " style="left:231.00px;top:676.00px;width:2.20px;height:9.20px;background:#111;"></div>
<div class="a " style="left:234.90px;top:676.00px;width:2.20px;height:9.20px;background:#111;"></div>
<div class="a btn" style="left:880.60px;top:671.50px;width:73.20px;height:17.60px;"></div>
<div class="t " style="left:903.30px;top:675px;font-size:8.7px;line-height:10px;letter-spacing:-0.055px;">Legend</div>
<div class="a " style="left:0.00px;top:697.00px;width:31.80px;height:14.00px;border:1px solid;border-color:transparent #8a8a8a #6a6a6a #fff;border-radius:0 0 2px 2px;"></div>
<div class="t " style="left:4.70px;top:699px;font-size:8.7px;line-height:10px;letter-spacing:-0.139px;">Log</div>
<div class="a " style="left:33.00px;top:697.00px;width:33.50px;height:15.40px;border-bottom:1px solid #9b9b9b;"></div>
<div class="t " style="left:38.20px;top:700px;font-size:8.7px;line-height:10px;letter-spacing:-0.242px;">Map</div>
<div class="a " style="left:67.00px;top:696.30px;width:33.00px;height:14.40px;border:1px solid #666;border-radius:2px;box-shadow:inset 1px 1px 0 #fff;background:#f3f3f3;"></div>
<div class="t " style="left:71.70px;top:699px;font-size:8.7px;line-height:10px;letter-spacing:-0.211px;">Status</div>
<div class="t " style="left:468.30px;top:701px;font-size:9px;line-height:10px;letter-spacing:0.436px;font-weight:bold;-webkit-text-stroke:0.25px;">100 %</div>
<div class="a " style="left:0.00px;top:713.00px;width:964.00px;height:6.00px;background:#dcedfb;border-top:1px solid #eaf3fb;border-bottom:1px solid #e6f1fb;"></div>
<div class="a " style="left:0.80px;top:714.40px;width:962.50px;height:3.80px;background:repeating-linear-gradient(90deg,#3a8ad6 0,#3a8ad6 2.2px,#eef6fd 2.2px,#eef6fd 3.87px);"></div>
<div class="a grp" style="left:-2.00px;top:729.00px;width:292.80px;height:33.00px;"></div>
<div class="a lbl" style="left:0.70px;top:724.00px;width:126.80px;height:10.00px;"></div>
<div class="t " style="left:1.70px;top:725px;font-size:9.3px;line-height:10px;letter-spacing:-0.066px;">Status register (SATA0)-[PIO4]</div>
<div class="a grp" style="left:293.40px;top:729.00px;width:295.50px;height:33.00px;"></div>
<div class="a lbl" style="left:298.40px;top:724.00px;width:91.00px;height:10.00px;"></div>
<div class="t " style="left:299.40px;top:725px;font-size:9.3px;line-height:10px;letter-spacing:-0.119px;">Error register (SATA0)</div>
<div class="a grp" style="left:595.00px;top:729.00px;width:35.60px;height:33.00px;"></div>
<div class="a lbl" style="left:596.00px;top:724.00px;width:34.50px;height:10.00px;"></div>
<div class="t " style="left:597.00px;top:725px;font-size:9.3px;line-height:10px;letter-spacing:0.118px;">SATA-II</div>
<div class="a grp" style="left:633.60px;top:729.00px;width:39.80px;height:33.00px;"></div>
<div class="a lbl" style="left:638.00px;top:724.00px;width:24.10px;height:10.00px;"></div>
<div class="t " style="left:639.00px;top:725px;font-size:9.3px;line-height:10px;letter-spacing:0.311px;">DMA</div>
<div class="a grp" style="left:946.90px;top:729.00px;width:61.70px;height:33.00px;"></div>
<div class="a lbl" style="left:952.50px;top:724.00px;width:28.00px;height:10.00px;"></div>
<div class="t " style="left:953.50px;top:725px;font-size:9.3px;line-height:10px;letter-spacing:-0.172px;">Power</div>
<div class="a ind" style="left:7.00px;top:737.70px;width:17.30px;height:9.30px;"></div>
<div class="t " style="left:5.95px;top:750px;font-size:9.1px;line-height:10px;color:#1f3156;">BSY</div>
<div class="a ind on" style="left:43.45px;top:737.70px;width:17.30px;height:9.30px;"></div>
<div class="t " style="left:41.64px;top:750px;font-size:9.1px;line-height:10px;color:#1f3156;">DRD</div>
<div class="a ind" style="left:79.90px;top:737.70px;width:17.30px;height:9.30px;"></div>
<div class="t " style="left:77.59px;top:750px;font-size:9.1px;line-height:10px;color:#1f3156;">DWF</div>
<div class="a ind on" style="left:116.35px;top:737.70px;width:17.30px;height:9.30px;"></div>
<div class="t " style="left:114.79px;top:750px;font-size:9.1px;line-height:10px;color:#1f3156;">DSC</div>
<div class="a ind on" style="left:152.80px;top:737.70px;width:17.30px;height:9.30px;"></div>
<div class="t " style="left:150.74px;top:750px;font-size:9.1px;line-height:10px;color:#1f3156;">DRQ</div>
<div class="a ind" style="left:189.25px;top:737.70px;width:17.30px;height:9.30px;"></div>
<div class="t " style="left:187.44px;top:750px;font-size:9.1px;line-height:10px;color:#1f3156;">CRR</div>
<div class="a ind" style="left:225.70px;top:737.70px;width:17.30px;height:9.30px;"></div>
<div class="t " style="left:226.17px;top:750px;font-size:9.1px;line-height:10px;color:#1f3156;">IDX</div>
<div class="a ind" style="left:262.15px;top:737.70px;width:17.30px;height:9.30px;"></div>
<div class="t " style="left:260.59px;top:750px;font-size:9.1px;line-height:10px;color:#1f3156;">ERR</div>
<div class="a ind" style="left:305.00px;top:737.70px;width:17.30px;height:9.30px;"></div>
<div class="t " style="left:303.95px;top:750px;font-size:9.1px;line-height:10px;color:#1f3156;">BBK</div>
<div class="a ind" style="left:341.50px;top:737.70px;width:17.30px;height:9.30px;"></div>
<div class="t " style="left:339.69px;top:750px;font-size:9.1px;line-height:10px;color:#1f3156;">UNC</div>
<div class="a ind" style="left:378.00px;top:737.70px;width:17.30px;height:9.30px;"></div>
<div class="a ind" style="left:414.50px;top:737.70px;width:17.30px;height:9.30px;"></div>
<div class="t " style="left:415.22px;top:750px;font-size:9.1px;line-height:10px;color:#1f3156;">INF</div>
<div class="a ind" style="left:451.00px;top:737.70px;width:17.30px;height:9.30px;"></div>
<div class="a ind" style="left:487.50px;top:737.70px;width:17.30px;height:9.30px;"></div>
<div class="t " style="left:486.19px;top:750px;font-size:9.1px;line-height:10px;color:#1f3156;">ABR</div>
<div class="a ind" style="left:524.00px;top:737.70px;width:17.30px;height:9.30px;"></div>
<div class="t " style="left:522.53px;top:750px;font-size:9.1px;line-height:10px;color:#1f3156;">TON</div>
<div class="a ind" style="left:560.50px;top:737.70px;width:17.30px;height:9.30px;"></div>
<div class="t " style="left:558.44px;top:750px;font-size:9.1px;line-height:10px;color:#1f3156;">AMN</div>
<div class="a ind on" style="left:603.60px;top:737.70px;width:17.30px;height:9.30px;"></div>
<div class="t " style="left:602.29px;top:750px;font-size:9.1px;line-height:10px;color:#1f3156;">PHY</div>
<div class="a ind on" style="left:645.00px;top:737.70px;width:17.30px;height:9.30px;"></div>
<div class="t " style="left:646.22px;top:750px;font-size:9.1px;line-height:10px;color:#1f3156;">RQ</div>
<div class="a ind on" style="left:954.50px;top:737.70px;width:17.30px;height:9.30px;"></div>
<div class="t " style="left:956.98px;top:750px;font-size:9.1px;line-height:10px;color:#1f3156;">5V</div>
<div class="a ind on" style="left:984.00px;top:737.70px;width:17.30px;height:9.30px;"></div>
<div class="t " style="left:983.95px;top:750px;font-size:9.1px;line-height:10px;color:#1f3156;">12V</div>
<div class="a " style="left:0.00px;top:762.00px;width:1009.00px;height:1.00px;background:#b4b4b4;"></div>
<div class="a " style="left:91.00px;top:763.00px;width:918.00px;height:1.00px;background:#8e8e8e;"></div>
<div class="a " style="left:0.00px;top:763.00px;width:91.00px;height:1.00px;background:#d8d8d8;"></div>
<div class="a " style="left:0.00px;top:764.00px;width:1015.00px;height:3.00px;background:#fafafa;"></div>
<div class="a " style="left:970.00px;top:59.00px;width:1.20px;height:664.00px;background:#a9a9a9;box-shadow:1px 0 0 #fafafa;"></div>
<svg style="left:980.500px;top:64.500px" width="20" height="22" viewBox="0 0 20 22"><text x="10.300" y="15.300" font-family="Liberation Sans,sans-serif" font-size="19" font-weight="bold" text-anchor="middle" fill="#111" stroke="#111" stroke-width=".5" textLength="8" lengthAdjust="spacingAndGlyphs">0</text><path d="M.8 4.300L5 7.800 .8 11.300z M19.400 4.300L15.200 7.800 19.400 11.300z" fill="#f4f4f4" stroke="#222" stroke-width=".9"/><path d="M2.800 17v3.500h15V17M6.500 18.500v2M10.300 17.500v3M14 18.500v2" stroke="#111" stroke-width="1.200" fill="none"/></svg>
<svg style="left:982.500px;top:95.500px" width="17" height="22" viewBox="0 0 17 22"><text x="2.300" y="4.500" font-family="Liberation Sans,sans-serif" font-size="5" font-weight="bold" fill="#111">1</text><path d="M5 2.800h3.300v4M6.300 5L8.300 7.500 10.300 5z" stroke="#111" stroke-width="1.100" fill="#111"/><rect x=".6" y="8.300" width="15.800" height="6.200" fill="#999" stroke="#111" stroke-width="1.200"/><path d="M2.500 9.500v3.800M4.500 9.500v3.800M6.500 9.500v3.800M8.500 9.500v3.800M10.500 9.500v3.800M12.500 9.500v3.800M14.500 9.500v3.800" stroke="#111" stroke-width="1.100"/><text x="8.500" y="21.300" font-family="Liberation Sans,sans-serif" font-size="5.800" font-weight="bold" text-anchor="middle" fill="#111" stroke="#111" stroke-width=".3" textLength="15.800" lengthAdjust="spacingAndGlyphs">RESET</text></svg>
<svg style="left:980px;top:127px" width="21" height="21" viewBox="0 0 21 21"><path d="M.8 19h4.400M3.300 19v-7h3.200l3.200-2.800" stroke="#111" stroke-width="1.300" fill="none"/><path d="M15.500 .3v3M15.500 9.400v9.500M10 11.800h10M13.500 19h4" stroke="#111" stroke-width="1.300" fill="none"/><rect x="13.500" y="13.300" width="4" height="2.600" fill="#555"/><rect x="13.800" y="3.200" width="3.400" height="6.300" fill="#f4f4f4" stroke="#111" stroke-width="1.300"/></svg>
<svg style="left:986px;top:163px" width="9" height="11" viewBox="0 0 9 11"><path d="M1 1h2.300v8.800H1zM4.800 1h2.400v8.800H4.800z" fill="#111"/></svg>
<svg style="left:980.500px;top:188.500px" width="20" height="17" viewBox="0 0 20 17"><path d="M5.500 8.500v-5h10.300v3.500" stroke="#111" stroke-width="1.200" fill="none"/><path d="M13.600 6.300L15.800 9.300 18 6.300z" fill="#111"/><path d="M9.500 1.300l4 3.600M13.500 1.300l-4 3.600" stroke="#111" stroke-width="1.500"/><text x=".2" y="16" font-family="Liberation Sans,sans-serif" font-size="7" font-weight="bold" fill="#111" stroke="#111" stroke-width=".3" textLength="11.600" lengthAdjust="spacingAndGlyphs">000</text><path d="M13.300 9.800v6.700" stroke="#333" stroke-width="1"/><text x="14.800" y="16" font-family="Liberation Sans,sans-serif" font-size="7" font-weight="bold" fill="#111" stroke="#111" stroke-width=".3">0</text></svg>
<svg style="left:981px;top:220.500px" width="19" height="20" viewBox="0 0 19 20"><path d="M13.800 .8l4 4M17.800 .8l-4 4" stroke="#111" stroke-width="1.700"/><rect x=".8" y="4" width="8" height="10.500" rx="1" fill="#e6e6e6" stroke="#111" stroke-width="1.300"/><rect x="4.200" y="6.500" width="8.500" height="10.500" rx="1" fill="#e6e6e6" stroke="#111" stroke-width="1.300"/><rect x="8" y="9.300" width="7.500" height="9.700" fill="#f6f6f6" stroke="#111" stroke-width="1.300"/><path d="M15.500 14.500L17.800 16 15.500 17.500z" stroke="#111" stroke-width=".8" fill="#111"/></svg>
<svg style="left:980px;top:256px" width="22" height="10" viewBox="0 0 22 10"><path d="M0 2.300h14.500M0 7.500h14.500" stroke="#111" stroke-width="1.900"/><rect x="5.500" y="1.300" width="6" height="7.300" fill="#111"/><path d="M14 .9h7.200v8.300H14" stroke="#111" stroke-width="1.500" fill="#f4f4f4"/><path d="M20.300 .9v8.300" stroke="#111" stroke-width="2"/><path d="M14.500 3.600h4v2.800h-4" stroke="#111" stroke-width="1" fill="none"/></svg>
<div class="a " style="left:973.00px;top:307.00px;width:31.50px;height:30.30px;border:1px solid;border-color:#d4d4d4 #e6e6e6 #e2e2e2 #c2c2c2;background:#f2f2f2;box-shadow:inset 1px 1px 0 #fafafa;"></div>
<div class="t " style="left:988.30px;top:313px;font-size:7.4px;line-height:9px;letter-spacing:-0.484px;font-weight:bold;-webkit-text-stroke:0.25px;color:#23236e;">Hd 0</div>
<svg style="left:979px;top:321.50px" width="24" height="9" viewBox="0 0 24 9"><path d="M.5 .8h5" stroke="#2a2f9a" stroke-width="1"/><rect x="4.600" y=".5" width="3.300" height="3.700" fill="#23239a"/><path d="M2.200 6.100h21" stroke="#111" stroke-width="1.500"/><rect x="9" y="3.500" width="7" height="4.500" rx=".8" fill="#111"/></svg>
<div class="a " style="left:973.00px;top:338.05px;width:31.50px;height:30.30px;border:1px solid;border-color:#d4d4d4 #e6e6e6 #e2e2e2 #c2c2c2;background:#f2f2f2;box-shadow:inset 1px 1px 0 #fafafa;"></div>
<div class="t " style="left:988.30px;top:344px;font-size:7.4px;line-height:9px;letter-spacing:-0.484px;font-weight:bold;-webkit-text-stroke:0.25px;color:#23236e;">Hd 1</div>
<svg style="left:979px;top:352.55px" width="24" height="9" viewBox="0 0 24 9"><path d="M.5 .8h5" stroke="#2a2f9a" stroke-width="1"/><rect x="4.600" y=".5" width="3.300" height="3.700" fill="#23239a"/><path d="M2.200 6.100h21" stroke="#111" stroke-width="1.500"/><rect x="9" y="3.500" width="7" height="4.500" rx=".8" fill="#111"/></svg>
<div class="a " style="left:973.00px;top:369.10px;width:31.50px;height:30.30px;border:1px solid;border-color:#d4d4d4 #e6e6e6 #e2e2e2 #c2c2c2;background:#f2f2f2;box-shadow:inset 1px 1px 0 #fafafa;"></div>
<div class="t " style="left:988.30px;top:375px;font-size:7.4px;line-height:9px;letter-spacing:-0.484px;font-weight:bold;-webkit-text-stroke:0.25px;color:#23236e;">Hd 2</div>
<svg style="left:979px;top:383.60px" width="24" height="9" viewBox="0 0 24 9"><path d="M.5 .8h5" stroke="#2a2f9a" stroke-width="1"/><rect x="4.600" y=".5" width="3.300" height="3.700" fill="#23239a"/><path d="M2.200 6.100h21" stroke="#111" stroke-width="1.500"/><rect x="9" y="3.500" width="7" height="4.500" rx=".8" fill="#111"/></svg>
<div class="a " style="left:973.00px;top:400.15px;width:31.50px;height:30.30px;border:1px solid;border-color:#d4d4d4 #e6e6e6 #e2e2e2 #c2c2c2;background:#f2f2f2;box-shadow:inset 1px 1px 0 #fafafa;"></div>
<div class="t " style="left:988.30px;top:406px;font-size:7.4px;line-height:9px;letter-spacing:-0.484px;font-weight:bold;-webkit-text-stroke:0.25px;color:#23236e;">Hd 3</div>
<svg style="left:979px;top:414.65px" width="24" height="9" viewBox="0 0 24 9"><path d="M.5 .8h5" stroke="#2a2f9a" stroke-width="1"/><rect x="4.600" y=".5" width="3.300" height="3.700" fill="#23239a"/><path d="M2.200 6.100h21" stroke="#111" stroke-width="1.500"/><rect x="9" y="3.500" width="7" height="4.500" rx=".8" fill="#111"/></svg>
<svg style="left:989px;top:446px" width="21" height="42" viewBox="0 0 21 42"><path d="M3.500 .5H21V41.500L3 33.500Q.5 32 .5 29V4Q.5 .5 3.500 .5z" fill="#4d5358" stroke="#33383c" stroke-width="1"/><circle cx="12.500" cy="13.500" r="6" fill="#1d5e9a" stroke="#2b3a48" stroke-width="1.200"/><path d="M9.500 13.500h6M9.500 13.500l1.500-1.500M9.500 13.500l1.500 1.500M15.500 13.500l-1.500-1.500M15.500 13.500l-1.500 1.500" stroke="#9cc4e8" stroke-width=".8" fill="none"/></svg>
<div class="a " style="left:1009.00px;top:0.00px;width:1.00px;height:767.00px;background:#c4c4c4;"></div>
<div class="a " style="left:1010.00px;top:0.00px;width:1.00px;height:767.00px;background:#b2b2b2;"></div>
<div class="a " style="left:1011.00px;top:0.00px;width:4.00px;height:767.00px;background:#fbfbfb;"></div>
<div class="a " style="left:1010.00px;top:97.50px;width:3.00px;height:45.50px;background:#2a2f3a;"></div>
<div class="a " style="left:1009.80px;top:756.00px;width:3.20px;height:8.00px;background:#111;"></div>
<div class="a " style="left:1011.50px;top:282.00px;width:2.00px;height:1.00px;background:#999;"></div>
<div class="a " style="left:1011.50px;top:327.00px;width:2.00px;height:1.00px;background:#999;"></div>
<div class="a " style="left:1011.50px;top:361.00px;width:2.00px;height:1.00px;background:#999;"></div>
<div class="a " style="left:1011.50px;top:394.00px;width:2.00px;height:1.00px;background:#999;"></div>
<div class="a " style="left:1011.50px;top:416.00px;width:2.00px;height:1.00px;background:#999;"></div>
<div class="a " style="left:1011.50px;top:442.00px;width:2.00px;height:1.00px;background:#999;"></div>
<div class="a " style="left:1011.50px;top:466.00px;width:2.00px;height:1.00px;background:#999;"></div>
<div class="a " style="left:1011.50px;top:493.00px;width:2.00px;height:1.00px;background:#999;"></div>
</div></body></html>
